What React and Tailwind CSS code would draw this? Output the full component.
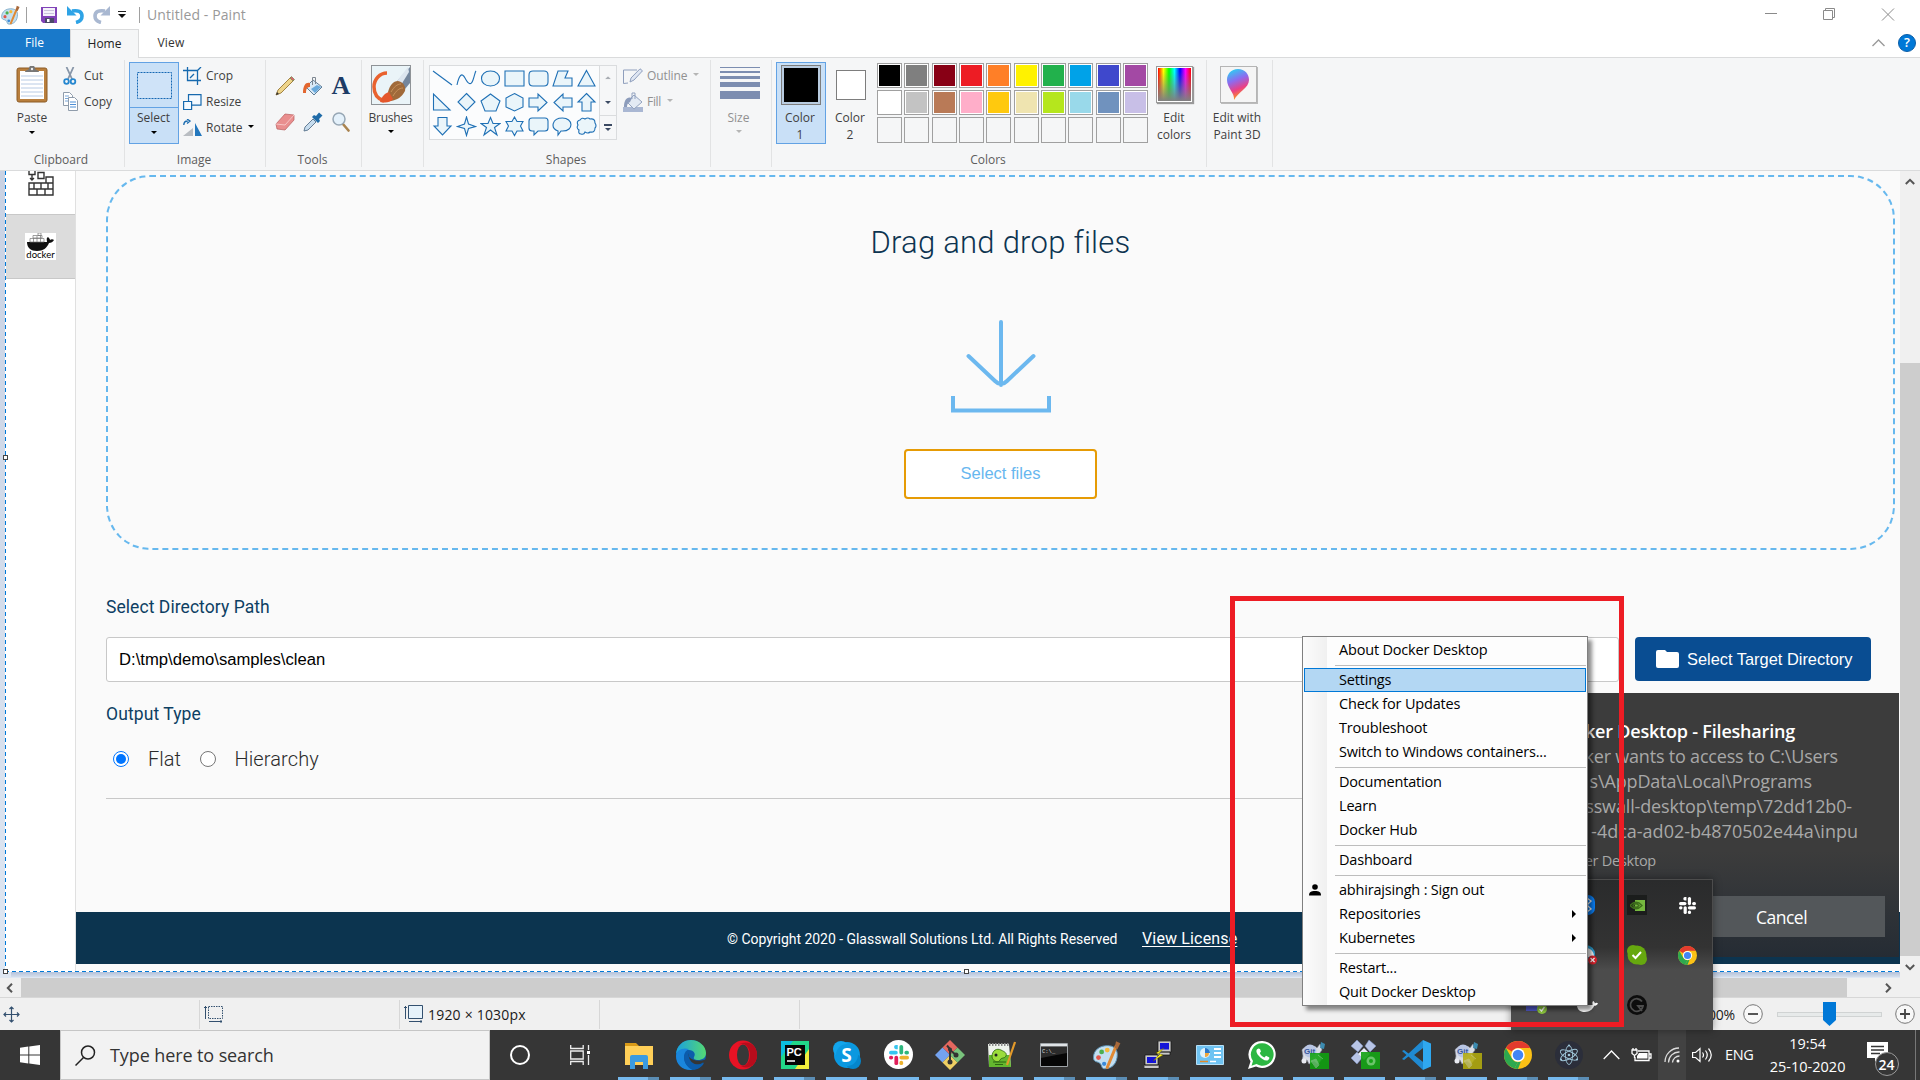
import React from "react";

/* ---------- small shared pieces ---------- */

function Caret({ className = "text-black" }) {
  return (
    <svg width="6" height="3" viewBox="0 0 6 3" className={className}>
      <path d="M0 0h6L3 3z" fill="currentColor" />
    </svg>
  );
}

function Group({ label, className, children }) {
  return (
    <div className={`relative flex h-[112px] shrink-0 flex-col ${className}`}>
      <div className="flex h-[89px] pt-1">{children}</div>
      <div className="flex h-[23px] items-center justify-center pt-[2px] pr-[3px] text-[#5c5c5c]">{label}</div>
      <div className="absolute top-[2px] right-0 h-[107px] w-px bg-[#e2e3e4]" />
    </div>
  );
}

/* ---------- title bar ---------- */

function PaletteIcon({ size = 20 }) {
  return (
    <svg width={size} height={size} viewBox="0 0 24 24">
      <path d="M2 14c0-6 5-9.500 11-9.500 5 0 8 2.500 8 7 0 7-4 11.500-10 11.500-3 0-2-3-4-4.500S2 18 2 14z" fill="#c3dff0" stroke="#5d94b8" strokeWidth=".8" />
      <circle cx="6" cy="14" r="1.900" fill="#e2574c" />
      <circle cx="8.500" cy="9.500" r="1.900" fill="#4caf50" />
      <circle cx="13" cy="8" r="1.900" fill="#f6b93b" />
      <circle cx="10.500" cy="19" r="1.700" fill="#3b8ad8" />
      <path d="M13 22 20 5" stroke="#e08a35" strokeWidth="2.400" strokeLinecap="round" />
      <path d="m19 6 1-5 3.500 1.500-2.500 5z" fill="#a8683a" />
    </svg>
  );
}

function TitleBar() {
  return (
    <div className="flex h-[29px] shrink-0 items-center bg-white">
      <PaletteIcon />
      <div className="ml-[6px] h-4 w-px bg-[#a0a0a0]" />
      <svg className="ml-[14px]" width="16" height="16" viewBox="0 0 16 16">
        <path d="M0 0h16v16H2l-2-2z" fill="#8143b8" />
        <path d="M2 1h12v8H2z" fill="#f4f2fa" />
        <path d="M3 3.500h10M3 6.500h10" stroke="#c9c3dc" />
        <path d="M4 11h9v5H4z" fill="#4a4a68" />
        <path d="M6 12h2.500v3H6z" fill="#fff" />
      </svg>
      <svg className="ml-[10px]" width="17" height="18" viewBox="0 0 17 18">
        <path d="M5 5c6-1 10 .5 10 5 0 3-2 5.500-6 6.500" fill="none" stroke="#2ea3e6" strokeWidth="3.600" />
        <path d="M0 0v9.500h9.500z" fill="#2ea3e6" />
      </svg>
      <svg className="ml-[9px]" width="17" height="18" viewBox="0 0 17 18">
        <path d="M12 5C6 4 2 5.500 2 10c0 3 2 5.500 6 6.500" fill="none" stroke="#a9b8d1" strokeWidth="3.600" />
        <path d="M17 0v9.500H7.500z" fill="#a9b8d1" />
      </svg>
      <svg className="ml-[8px]" width="8" height="7" viewBox="0 0 8 7">
        <path d="M0 .5h8" stroke="#222" />
        <path d="M0 3h8L4 7z" fill="#111" />
      </svg>
      <div className="ml-[13px] h-4 w-px bg-[#a0a0a0]" />
      <div className="ml-[7px] text-[14px] tracking-[0.1px] text-[#999]">Untitled - Paint</div>
      <svg className="mr-[25px] ml-auto" width="131" height="13" viewBox="0 0 131 13" fill="none" stroke="#8a8a8a">
        <path d="M1 5.500h12M59.500 2.500h9v9h-9zM61.500 2.500v-2h9v9h-2M118 .5l12 12M130 .5l-12 12" />
      </svg>
    </div>
  );
}

function Tabs() {
  return (
    <div className="flex h-[29px] shrink-0 border-b border-[#dadbdc] bg-white text-[12px]">
      <div className="flex w-[70px] items-center justify-center bg-[#1979ca] pr-[1px] text-white">File</div>
      <div className="-mb-px flex w-[69px] items-center justify-center border border-b-0 border-[#dadbdc] bg-[#f5f6f7] text-[#222]">Home</div>
      <div className="flex w-[64px] items-center justify-center tracking-[0.2px] text-[#333]">View</div>
      <div className="mr-[4px] ml-auto flex items-center gap-[13px]">
        <svg width="13" height="8" viewBox="0 0 13 8" fill="none" stroke="#9a9a9a" strokeWidth="1.400">
          <path d="m.5 7 6-6 6 6" />
        </svg>
        <div className="flex size-[18px] items-center justify-center rounded-full border border-[#0b5ea8] bg-[#0078d7] text-[13px] font-semibold text-white">?</div>
      </div>
    </div>
  );
}

/* ---------- ribbon ---------- */

function ClipboardGroup() {
  return (
    <Group label="Clipboard" className="w-[125px]">
      <div className="ml-[11px] flex w-[42px] shrink-0 flex-col items-center pt-[4px]">
        <svg width="32" height="37" viewBox="0 0 32 37">
          <rect x="1" y="2" width="30" height="34" rx="2" fill="#b97f3d" stroke="#8d5c26" />
          <path d="M4 5h24v28H4z" fill="#fff" />
          <path d="M5 10h22M5 14h22M5 18h22M5 22h22M5 26h22M5 30h22" stroke="#b8cbe4" />
          <path d="M9 6c0-2 4-2 4-3.500a3 3 0 0 1 6 0C19 4 23 4 23 6z" fill="#777" />
          <circle cx="16" cy="3" r="1.200" fill="#eee" />
        </svg>
        <div className="mt-[7px] leading-[16px]">Paste</div>
        <div className="mt-[5px]"><Caret /></div>
      </div>
      <div className="mt-px ml-[9px] flex flex-col">
        <div className="flex h-[26px] items-center gap-[5px]">
          <svg width="17" height="18" viewBox="0 0 17 18" fill="none">
            <path d="M4.500 0 10 12M11.500 0 6 12" stroke="#8796a8" strokeWidth="1.800" />
            <circle cx="4.500" cy="14.500" r="2.300" stroke="#2687cf" strokeWidth="1.800" />
            <circle cx="11" cy="14.500" r="2.300" stroke="#2687cf" strokeWidth="1.800" />
          </svg>
          Cut
        </div>
        <div className="flex h-[26px] items-center gap-[5px]">
          <svg width="17" height="20" viewBox="0 0 17 20" fill="#fff" stroke="#8f9cab">
            <path d="M1.500.5h6l3 3v10h-9z" />
            <path d="M3 4h4M3 6.500h4M3 9h4" stroke="#7aa7d8" />
            <path d="M6.500 5.500h6l3 3v10h-9z" />
            <path d="M8 10h6M8 12.500h6M8 15h6" stroke="#4d8fd6" />
          </svg>
          Copy
        </div>
      </div>
    </Group>
  );
}

function ImageGroup() {
  return (
    <Group label="Image" className="w-[141px]">
      <div className="ml-[4px] flex h-[82px] w-[50px] flex-col items-center border border-[#62a2e4] bg-[#c9e0f7]">
        <div className="flex h-[45px] w-full items-center justify-center border-b border-[#62a2e4]">
          <svg width="35" height="27" viewBox="0 0 35 27">
            <rect x=".5" y=".5" width="34" height="26" fill="#cfe3f8" stroke="#1567b3" strokeDasharray="2 1" />
          </svg>
        </div>
        <div className="mt-[1px] mr-px leading-[17px]">Select</div>
        <div className="mt-[5px] mr-px"><Caret /></div>
      </div>
      <div className="mt-px ml-[4px] flex flex-col">
        <div className="flex h-[26px] items-center gap-[4px]">
          <svg width="19" height="18" viewBox="0 0 19 18" fill="none" stroke="#1669ae" strokeWidth="1.300">
            <path d="M4.500 0v13.500H18M0 3.500h14.500V18M7 11l4-4M14.500 3.500 18 0" />
          </svg>
          Crop
        </div>
        <div className="flex h-[26px] items-center gap-[4px]">
          <svg width="19" height="17" viewBox="0 0 19 17" fill="#f4f9fe" stroke="#1669ae" strokeWidth="1.200">
            <path d="M5.500.6h12.500v10.500H5.500z" />
            <path d="M.6 7.500h8v8h-8z" />
          </svg>
          Resize
        </div>
        <div className="flex h-[26px] items-center gap-[4px]">
          <svg width="19" height="18" viewBox="0 0 19 18">
            <path d="M0 17 10 9v8z" fill="#b9bdc2" />
            <path d="M12 4v13h7z" fill="#2377bd" />
            <path d="M.8 6c0-3 1-4 4-4M4 0l3 2-3 2.500" fill="none" stroke="#1669ae" strokeWidth="1.300" />
          </svg>
          Rotate
          <div className="ml-px flex h-4 items-center pb-[3px]"><Caret /></div>
        </div>
      </div>
    </Group>
  );
}

function ToolsGroup() {
  return (
    <Group label="Tools" className="w-[96px]">
      <div className="mt-[4px] ml-[5px] grid h-[72px] w-[84px] grid-cols-3 place-items-center">
        <svg width="20" height="20" viewBox="0 0 20 20">
          <path d="m1 19 2-5L15.500 1.500l3 3L6 17z" fill="#eed48a" stroke="#8d6a24" strokeWidth=".8" />
          <path d="m15 2 1.500-1.500 3 3L18 5z" fill="#d9636b" stroke="#5d8c46" strokeWidth=".6" />
          <path d="m1 19 1-3 2 2z" fill="#333" />
        </svg>
        <svg width="20" height="20" viewBox="0 0 20 20">
          <path d="M10 4 19 11l-8 8-8-8z" fill="#d8e9f6" stroke="#5f7d97" />
          <path d="m12 17 6-6-4-2-6 4z" fill="#68a9dc" />
          <path d="M9.500 9V1.500h3V8" fill="none" stroke="#7d8791" />
          <path d="M7 7C3 6 0 9 0 17h3c0-4 1-6 4-6z" fill="#e2662f" />
        </svg>
        <span className="font-[Liberation_Serif] text-[26px] leading-none font-bold text-[#1d3c66]">A</span>
        <svg width="20" height="18" viewBox="0 0 20 18">
          <path d="M1 11 10 1l9 1v5l-9 10-8-1z" fill="#e98e8e" stroke="#b75d5d" strokeWidth=".7" />
          <path d="m1 11 9 1 9-10" fill="none" stroke="#f6c4c4" />
        </svg>
        <svg width="20" height="20" viewBox="0 0 20 20">
          <path d="m11 3 2 1 3-3.500 3.500 3L16 7l1 2-2 2-6-6z" fill="#1f6ba8" />
          <path d="M10 7 2 15l-1 4 4-1 8-8z" fill="#c6dcee" stroke="#56718a" strokeWidth=".9" />
        </svg>
        <svg width="18" height="20" viewBox="0 0 18 20">
          <path d="m10.500 11.500 6 7" stroke="#a9834f" strokeWidth="2.600" strokeLinecap="round" />
          <circle cx="7" cy="7" r="6" fill="#e4f1fb" stroke="#97a7b5" strokeWidth="1.500" />
        </svg>
      </div>
    </Group>
  );
}

function BrushesGroup() {
  return (
    <Group label="" className="w-[62px]">
      <div className="ml-[4px] flex w-[50px] flex-col items-center pt-[3px]">
        <svg width="40" height="40" viewBox="0 0 40 40">
          <rect x=".5" y=".5" width="39" height="39" fill="#eaf4f8" stroke="#8f9397" />
          <path d="M16 8C9 8 3 14 3 22c0 7 4 12 10 14" fill="none" stroke="#e9622f" strokeWidth="3.500" />
          <path d="M39 2 26 16l8 8 5-6z" fill="#75879d" />
          <path d="m37 2-11 14 4 4 8-13z" fill="#dde6ef" />
          <path d="M17 27c2-7 5-11 10-11 5 1 8 5 7 10-3 6-8 9-14 10z" fill="#a06a3a" />
          <path d="M9 37c2-6 5-9 9-10l4 7c-3 4-8 4-13 3z" fill="#e4572c" />
          <path d="M20 27c3-5 6-8 10-8M22 31c3-5 6-8 10-8" stroke="#c9935c" fill="none" />
        </svg>
        <div className="mt-[5px] mr-px leading-[16px] tracking-[-0.2px]">Brushes</div>
        <div className="mt-[4px] mr-px"><Caret /></div>
      </div>
    </Group>
  );
}

const SHAPES = [
  "M1 3 20 17",
  "M1 17C3 7 6 4 9 10s6 8 8 2 2-8 3-9",
  "M10.500 3c12 0 12 15 0 15s-12-15 0-15z",
  "M1 3h19v15H1z",
  "M5 3h11q4 0 4 4v7q0 4-4 4H5q-4 0-4-4V7q0-4 4-4z",
  "M6 3h10l-3 7h7v8H1z",
  "M10.500 2.500 19 18H2z",
  "M1.500 2v16H18z",
  "M10.500 1.500 19 10l-8.500 8.500L2 10z",
  "M10.500 2 20 9l-4 10H5L1 9z",
  "M10.500 1.500 19 6v9l-8.500 4L2 15V6z",
  "M1 6h9V2l9 8.500-9 8.500v-4H1z",
  "M20 6h-9V2l-9 8.500 9 8.500v-4h9z",
  "M10.500 1.500 19 10h-4v9H6v-9H2z",
  "M6 1.500h9V10h4l-8.500 9L2 10h4z",
  "m10.500 1 2 7 7 2.500-7 2-2 7-2-7-7-2 7-2.500z",
  "m10.500 1.500 2.500 6h7l-5.500 4 2.500 7.500-6.500-5-6.500 5 2.500-7.500L1 7.500h7z",
  "m10.500 1 2.500 4.500h6L16.500 10l2.500 5h-6l-2.500 4.500L8 15H2l2.500-5L2 5.500h6z",
  "M4 2h13q3 0 3 3v7q0 3-3 3H10l-4 4v-4H4q-3 0-3-3V5q0-3 3-3z",
  "M6 19V15C-2 12 0 2 10.500 2s12 13 0 13H9z",
  "M4 4q2-3 5-1 3-2 5 0 5-1 5 4 2 3 0 5 0 5-5 4-2 2-5 0-1 3-4 2-3 0-2-4Q0 12 2 9 0 5 4 4z",
];

function ShapesGroup() {
  return (
    <Group label="Shapes" className="w-[287px]">
      <div className="mt-[3px] ml-[5px] flex h-[75px] w-[188px] shrink-0 border border-[#dadcde] bg-[#fbfcfd]">
        <div className="grid w-[168px] grid-cols-7 grid-rows-3 place-items-center">
          {SHAPES.map((d, i) => (
            <svg key={i} width="21" height="21" viewBox="0 0 21 21" fill={i < 2 ? "none" : "#eaf5fa"} stroke="#1f70b5" strokeWidth="1.100">
              <path d={d} />
            </svg>
          ))}
        </div>
        <div className="ml-[1px] flex w-[17px] flex-col border-l border-[#dadcde] bg-[#f6f7f8]">
          <div className="flex h-1/3 rotate-180 items-center justify-center"><Caret className="text-[#a9adb3]" /></div>
          <div className="flex h-1/3 items-center justify-center"><Caret className="text-[#3b4a63]" /></div>
          <div className="flex h-1/3 flex-col items-center justify-center gap-[2px] border-t border-[#dadcde]">
            <div className="h-[2px] w-2 bg-[#3b4a63]" />
            <Caret className="text-[#3b4a63]" />
          </div>
        </div>
      </div>
      <div className="mt-px ml-[6px] flex flex-col text-[#919191]">
        <div className="flex h-[26px] items-center gap-[4px]">
          <svg width="20" height="16" viewBox="0 0 20 16" fill="none" stroke="#8f9fbd">
            <path d="M14 2H.5v13.500L5 15" />
            <path d="m7 14 1-4L17 .8l2.500 2L11 12z" fill="#dfe6f2" />
          </svg>
          <span className="tracking-[-0.1px]">Outline</span>
          <div className="ml-[2px] pb-[3px]"><Caret className="text-[#b5b5b5]" /></div>
        </div>
        <div className="flex h-[26px] items-center gap-[4px]">
          <svg width="20" height="20" viewBox="0 0 20 20">
            <path d="M0 15h20v5H0z" fill="#a9b7d3" />
            <path d="m11 3 8 7-8 7-7-7z" fill="#e3eaf4" stroke="#93a3c0" />
            <path d="M9 7V1h3v6" fill="none" stroke="#93a3c0" />
            <path d="M9 6C4 4 1 8 1 15h3c0-3 1-4 3-5z" fill="#8c9cbb" />
          </svg>
          <span className="tracking-[-0.3px]">Fill</span>
          <div className="ml-[2px] pb-[3px]"><Caret className="text-[#b5b5b5]" /></div>
        </div>
      </div>
    </Group>
  );
}

function SizeGroup() {
  return (
    <Group label="" className="w-[61px]">
      <div className="ml-[9px] flex w-[40px] flex-col items-center pt-[5px] text-[#919191]">
        <div className="h-px w-full bg-[#7c8db0]" />
        <div className="mt-[3px] h-[2px] w-full bg-[#7c8db0]" />
        <div className="mt-[3px] h-[3px] w-full bg-[#7c8db0]" />
        <div className="mt-[3px] h-[5px] w-full bg-[#7c8db0]" />
        <div className="mt-[4px] h-[8px] w-full bg-[#7c8db0]" />
        <div className="mt-[11px] mr-[3px] leading-[16px]">Size</div>
        <div className="mt-[4px] mr-[3px]"><Caret className="text-[#b5b5b5]" /></div>
      </div>
    </Group>
  );
}

const ROW1 = ["bg-black", "bg-[#7f7f7f]", "bg-[#880015]", "bg-[#ed1c24]", "bg-[#ff7f27]", "bg-[#fff200]", "bg-[#22b14c]", "bg-[#00a2e8]", "bg-[#3f48cc]", "bg-[#a349a4]"];
const ROW2 = ["bg-white", "bg-[#c3c3c3]", "bg-[#b97a57]", "bg-[#ffaec9]", "bg-[#ffc90e]", "bg-[#efe4b0]", "bg-[#b5e61d]", "bg-[#99d9ea]", "bg-[#7092be]", "bg-[#c8bfe7]"];

function ColorsGroup() {
  return (
    <Group label="Colors" className="w-[435px]">
      <div className="ml-[4px] flex h-[82px] w-[50px] flex-col items-center border border-[#62a2e4] bg-[#c9e0f7] pt-[2px]">
        <div className="size-[40px] border border-[#7d7d7d] bg-[#b9cce0] p-[2px]"><div className="size-full bg-black" /></div>
        <div className="mt-[4px] mr-[2px] text-center leading-[17px]">Color<br />1</div>
      </div>
      <div className="flex w-[50px] flex-col items-center pt-[3px]">
        <div className="flex size-[40px] items-center justify-center"><div className="size-[30px] border border-[#7d7d7d] bg-white" /></div>
        <div className="mt-[4px] mr-[2px] text-center leading-[17px]">Color<br />2</div>
      </div>
      <div className="mt-px ml-px grid h-[80px] w-[271px] grid-cols-[repeat(10,25px)] justify-between gap-y-[2px]">
        {ROW1.concat(ROW2).map((c, i) => (
          <div key={i} className="size-[25px] border border-[#a0a0a0] bg-white p-px"><div className={`size-full ${c}`} /></div>
        ))}
        {ROW1.map((c) => (
          <div key={c} className="h-[26px] w-[25px] border border-[#a0a0a0] bg-[#f5f6f7]" />
        ))}
      </div>
      <div className="ml-[4px] flex w-[44px] flex-col items-center pt-[4px]">
        <div className="size-[37px] border border-[#9a9a9a] bg-white p-px shadow-[1px_1px_1px_#999]">
          <div className="size-full bg-[linear-gradient(to_bottom,transparent_10%,#808080),linear-gradient(to_right,red,#ff0,lime,cyan,blue,magenta,red)]" />
        </div>
        <div className="mt-[6px] text-center leading-[17px]">Edit<br />colors</div>
      </div>
    </Group>
  );
}

function Paint3DGroup() {
  return (
    <Group label="" className="w-[66px]">
      <div className="flex w-[62px] flex-col items-center pt-[4px]">
        <div className="flex size-[37px] items-center justify-center border border-[#b5b5b5] bg-[#f5f5f5] shadow-[1px_1px_0_#bbb]">
          <svg width="24" height="31" viewBox="0 0 24 31">
            <defs>
              <linearGradient id="drop" x1=".3" x2=".6" y1="0" y2="1">
                <stop offset="0" stopColor="#2ecdf3" />
                <stop offset=".35" stopColor="#8b6cf0" />
                <stop offset=".65" stopColor="#ea3f86" />
                <stop offset="1" stopColor="#ffb000" />
              </linearGradient>
            </defs>
            <path d="M12 0c7 0 11 5 11 11 0 8-11 12-15 20 1-7-7-12-7-20C1 5 5 0 12 0z" fill="url(#drop)" />
          </svg>
        </div>
        <div className="mt-[6px] mr-[2px] text-center leading-[17px] whitespace-nowrap">Edit with<br />Paint 3D</div>
      </div>
    </Group>
  );
}

function Ribbon() {
  return (
    <div className="flex h-[113px] shrink-0 border-b border-[#dadbdc] bg-[#f5f6f7] text-[12px] text-[#3f3f3f]">
      <ClipboardGroup />
      <ImageGroup />
      <ToolsGroup />
      <BrushesGroup />
      <ShapesGroup />
      <SizeGroup />
      <ColorsGroup />
      <Paint3DGroup />
    </div>
  );
}

/* ---------- canvas ---------- */

function Sidebar() {
  return (
    <div className="flex w-[70px] shrink-0 flex-col border-r border-[#e0e0e0] bg-white">
      <div className="flex h-[43px] justify-center">
        <svg width="26" height="25" viewBox="0 0 26 25" fill="none" stroke="#333" strokeWidth="1.400">
          <path d="M1 24h24v-6H1zM1 18h24v-6H1zM9 24v-6M17 24v-6M6 18v-6M13 18v-6M20 18v-6M18 12V6h7v6M10 1.500h6v6h-6zM1-3h6v6.500H1zM4 4v5M2 7l2 2 2-2" />
        </svg>
      </div>
      <div className="flex h-[65px] items-center justify-center border-y border-[#c8c8c8] bg-[#dcdcdc]">
        <div className="flex h-[27px] w-[31px] flex-col items-center bg-white">
          <svg width="27" height="18" viewBox="0 0 27 18">
            <path d="M0 9h20c0-2-1-4 1-5 1 1 2 2 2 3 1-1 3-1 4 0-1 2-3 3-5 3-2 5-6 8-12 8C4 18 0 15 0 9z" fill="#111" />
            <path d="M3 5.500h14V9H3zM6 2.500h9V5H6zM11 0h3v2.500h-3zM6.500 5v4M10 3v6M13.500 3v6" fill="none" stroke="#777" strokeWidth=".7" />
          </svg>
          <span className="font-[Lato] text-[9.500px] leading-[7px] text-black">docker</span>
        </div>
      </div>
    </div>
  );
}

function DropZone() {
  return (
    <div className="flex h-[375px] flex-col items-center rounded-[44px] border-2 border-dashed border-[#66b8ee]">
      <div className="mt-[46px] font-[Roboto] text-[31px] leading-[40px] font-light tracking-[0.25px] text-[#0d3450]">Drag and drop files</div>
      <svg className="mt-[57px]" width="102" height="94" viewBox="0 0 102 94" fill="none" stroke="#6cb8ef" strokeWidth="4">
        <path d="M51 2v63M18.500 36 45 61q6 6 12 0L83.500 36" strokeLinecap="round" />
        <path d="M3 76v14.500h96V76" />
      </svg>
      <div className="mt-[35px] flex h-[50px] w-[193px] items-center justify-center rounded-[4px] border-2 border-[#e69b05] bg-white pb-[2px] font-[Liberation_Sans] text-[16.500px] text-[#67b7ef]">Select files</div>
    </div>
  );
}

function PageBody() {
  return (
    <div className="flex grow flex-col bg-[#fafafa]">
      <div className="flex h-[741px] flex-col pt-[4px] pr-[5px] pl-[30px]">
        <DropZone />
        <div className="mt-[46px] font-[Roboto] text-[17.500px] leading-[22px] tracking-[0.06px] text-[#0d3f63]">Select Directory Path</div>
        <div className="mt-[19px] flex gap-[16px] font-[Liberation_Sans]">
          <div className="flex h-[45px] w-[1513px] items-center rounded-[3px] border border-[#c8c8c8] bg-white pt-[1px] pl-[12px] text-[16.650px] text-black">D:\tmp\demo\samples\clean</div>
          <div className="flex h-[44px] w-[236px] items-center rounded-[4px] bg-[#094d92] pl-[21px] text-white">
            <svg width="23" height="18" viewBox="0 0 23 18"><path d="M2 0h7l2 2h10q2 0 2 2v12q0 2-2 2H2q-2 0-2-2V2q0-2 2-2z" fill="#fff" /></svg>
            <span className="ml-[8px] text-[16.400px]">Select Target Directory</span>
          </div>
        </div>
        <div className="mt-[21px] font-[Roboto] text-[17.500px] leading-[22px] tracking-[0.1px] text-[#0d3f63]">Output Type</div>
        <div className="mt-[22px] flex h-[24px] items-center pl-[7px] font-[Roboto] text-[20px] font-light text-[#2b2b2b]">
          <div className="flex size-[16px] items-center justify-center rounded-full border border-[#0075ff] bg-white"><div className="size-[10px] rounded-full bg-[#0075ff]" /></div>
          <span className="ml-[19px] w-[33px]">Flat</span>
          <div className="ml-[19px] size-[16px] rounded-full border border-[#767676] bg-white" />
          <span className="ml-[18.500px] tracking-[0.1px]">Hierarchy</span>
        </div>
        <div className="mt-[27px] mr-[23px] h-px bg-[#c8c8c8]" />
      </div>
      <div className="flex h-[52px] items-center bg-[#0c344f] pl-[651px] text-white">
        <span className="w-[415px] pt-[3px] font-[Roboto] text-[14px] tracking-[-0.030px]">© Copyright 2020 - Glasswall Solutions Ltd. All Rights Reserved</span>
        <span className="pt-[2px] font-[Roboto] text-[16px] tracking-[0.150px] underline underline-offset-2">View License</span>
      </div>
    </div>
  );
}

function Handle({ className }) {
  return <div className={`absolute size-[5px] border border-[#444] bg-white ${className}`} />;
}

function Canvas() {
  return (
    <div className="flex h-[807px] shrink-0">
      <div className="relative flex w-[1900px] flex-col bg-linear-to-b from-[#c9d2e3] to-[#dfe7f2]">
        <div className="flex h-[800px] pl-[5px]">
          <div className="w-px bg-[repeating-linear-gradient(to_bottom,#0078d7_0_4px,#fff_4px_7px)]" />
          <Sidebar />
          <PageBody />
        </div>
        <div className="ml-[5px] h-px bg-[repeating-linear-gradient(to_right,#0078d7_0_4px,#fff_4px_7px)]" />
        <div className="ml-[11px] h-[5px] bg-linear-to-b from-[#b4c2d9] to-[#d5deec]" />
        <Handle className="top-[284px] left-[3px]" />
        <Handle className="top-[798px] left-[3px]" />
        <Handle className="top-[798px] left-[964px]" />
      </div>
      <div className="flex w-[20px] flex-col items-center bg-[#f0f0f0]">
        <svg className="mt-[7px]" width="10" height="7" viewBox="0 0 10 7" fill="none" stroke="#555" strokeWidth="2"><path d="m.8 6 4.200-4.200L9.200 6" /></svg>
        <div className="mt-[178px] h-[593px] w-full bg-[#cdcdcd]" />
        <svg className="mt-[8px]" width="10" height="7" viewBox="0 0 10 7" fill="none" stroke="#555" strokeWidth="2"><path d="m.8 1 4.200 4.200L9.200 1" /></svg>
      </div>
    </div>
  );
}

function HScroll() {
  return (
    <div className="flex h-[19px] shrink-0 items-center bg-[#f0f0f0]">
      <svg className="ml-[6px]" width="7" height="10" viewBox="0 0 7 10" fill="none" stroke="#555" strokeWidth="2"><path d="M6 .8 1.800 5 6 9.200" /></svg>
      <div className="ml-[8px] h-full w-[1826px] bg-[#cdcdcd]" />
      <svg className="ml-[38px]" width="7" height="10" viewBox="0 0 7 10" fill="none" stroke="#555" strokeWidth="2"><path d="M1 .8 5.200 5 1 9.200" /></svg>
    </div>
  );
}

function StatusBar() {
  return (
    <div className="flex h-[33px] shrink-0 items-center border-t border-[#d7d7d7] bg-[#f0f0f0] text-[14px] text-[#1a1a1a]">
      <div className="flex h-[29px] w-[200px] items-center border-r border-[#d7d7d7] pl-[3px]">
        <svg width="17" height="17" viewBox="0 0 17 17" fill="none" stroke="#33506f" strokeWidth="1.200"><path d="M8.500 1v15M1 8.500h15M6.500 3l2-2 2 2M6.500 14l2 2 2-2M3 6.500l-2 2 2 2M14 6.500l2 2-2 2" /></svg>
      </div>
      <div className="flex h-[29px] w-[200px] items-center border-r border-[#d7d7d7] pl-[4px]">
        <svg width="20" height="18" viewBox="0 0 20 18" fill="none" stroke="#33506f"><path d="M1.500 1v13M0 2.500h3M5 16.500h13M17 15v3" /><path d="M4.500 1.500h14v12h-14z" strokeDasharray="1.500 1" /></svg>
      </div>
      <div className="flex h-[29px] w-[200px] items-center border-r border-[#d7d7d7] pl-[4px]">
        <svg width="20" height="18" viewBox="0 0 20 18" fill="none" stroke="#33506f"><path d="M1.500 1v13M0 2.500h3M5 16.500h13M17 15v3" /><path d="M4.500.5h14v13h-14z" fill="#e6f2fa" /></svg>
        <span className="ml-[4px] pt-px tracking-[0.200px]">1920 × 1030px</span>
      </div>
      <div className="h-[29px] w-[200px] border-r border-[#d7d7d7]" />
      <div className="mr-[5px] ml-auto flex items-center">
        <span className="mr-[8px] pt-px tracking-[-0.200px]">100%</span>
        <svg width="20" height="20" viewBox="0 0 20 20" fill="#f8f8f8" stroke="#777"><circle cx="10" cy="10" r="9.300" /><path d="M5 10h10" stroke="#444" strokeWidth="1.800" /></svg>
        <div className="relative mr-[13px] ml-[14px] flex h-[24px] w-[105px] items-center">
          <div className="h-[5px] w-full border border-[#d0d3d3] bg-[#e7eaea]" />
          <svg className="absolute top-0 left-[46px]" width="13" height="24" viewBox="0 0 13 24"><path d="M0 0h13v18l-6.500 6L0 18z" fill="#0078d7" /></svg>
        </div>
        <svg width="20" height="20" viewBox="0 0 20 20" fill="#f8f8f8" stroke="#777"><circle cx="10" cy="10" r="9.300" /><path d="M5 10h10M10 5v10" stroke="#444" strokeWidth="1.800" /></svg>
      </div>
    </div>
  );
}

/* ---------- taskbar ---------- */

function ChromeIcon({ size = 27 }) {
  return (
    <svg width={size} height={size} viewBox="0 0 24 24">
      <circle cx="12" cy="12" r="12" fill="#fbc116" />
      <path d="M12 0a12 12 0 0 1 10.400 6H12a6 6 0 0 0-5.200 3L1.600 6A12 12 0 0 1 12 0z" fill="#e33b2e" />
      <path d="M1.600 6 6.800 15A6 6 0 0 0 12 18l-3 5.600A12 12 0 0 1 1.600 6z" fill="#2da94f" />
      <path d="m9 23.600 3-5.600a6 6 0 0 0 2.500-.5L12 24z" fill="#2da94f" />
      <circle cx="12" cy="12" r="5.800" fill="#fff" />
      <circle cx="12" cy="12" r="4.500" fill="#4285f4" />
    </svg>
  );
}

function SlackMark({ size, colors }) {
  const [a, b, c, d] = colors;
  return (
    <svg width={size} height={size} viewBox="0 0 24 24">
      <g fill={a}><rect x="0" y="7" width="10.500" height="4.500" rx="2.200" /><path d="M10.500 0v5H8.300a2.200 2.500 0 0 1 0-5z" /></g>
      <g fill={b}><rect x="12.500" y="0" width="4.500" height="11.500" rx="2.200" /><rect x="18.500" y="7" width="5.500" height="4.500" rx="2.200" /></g>
      <g fill={c}><rect x="12.500" y="13" width="11.500" height="4.500" rx="2.200" /><rect x="12.500" y="19" width="4.500" height="5" rx="2.200" /></g>
      <g fill={d}><rect x="6.500" y="13" width="4.500" height="11" rx="2.200" /><rect x="0" y="13" width="5" height="4.500" rx="2.200" /></g>
    </svg>
  );
}

function GitGear({ badge }) {
  return (
    <svg width="30" height="28" viewBox="0 0 30 28">
      <path d="M3 9c2-4 12-6 15-2l3-4 2 6-3 4 3 5-4 5-4-3-5 3-2-4-5 1 1-5z" fill="#d9dde6" stroke="#8b90a0" strokeWidth=".6" />
      <circle cx="11" cy="10" r="6.500" fill="#b9c6e4" />
      <text x="5" y="13" fontFamily="Liberation Sans" fontSize="8" fontWeight="700" fill="#39599c">Git</text>
      <path d="m22 1 4 2-1 5-4-1z" fill="#3c8bb0" />
      <circle cx="5" cy="20" r="2.500" fill="#e9ebf1" />
      <path d="M11 12h19v16H11z" fill={badge} opacity=".88" />
      <path d="m12 20 5-2 3 6-3 3zM19 14l5 4" fill="#d9dde6" stroke="#d9dde6" opacity=".35" />
    </svg>
  );
}

const APPS = [
  { key: "explorer", multi: true, icon: (
    <svg width="28" height="28" viewBox="0 0 28 28"><path d="M0 2h11l3 3v4H0z" fill="#d99a18" /><path d="M0 5h28v19H0z" fill="#ffcf58" /><path d="M5 28V16q0-2 2-2h14q2 0 2 2v12h-5v-7h-8v7z" fill="#3b9be0" /></svg>
  ) },
  { key: "edge", multi: true, icon: (
    <svg width="30" height="30" viewBox="0 0 30 30">
      <defs><linearGradient id="edgeTop" x1="0" x2="1"><stop offset="0" stopColor="#1aa0e0" /><stop offset="1" stopColor="#54d873" /></linearGradient></defs>
      <circle cx="15" cy="15" r="15" fill="#0c5cab" />
      <path d="M0 15C0 6 7 0 15 0s15 6 15 13c0 5-4 7-8 7-3 0-5-1-4-3 2-3 0-7-5-7C6 9 0 12 0 15z" fill="url(#edgeTop)" />
      <path d="M0 16c0-6 7-9 13-7-4 2-5 5-5 8 0 6 4 11 9 12.800C7 31 0 25 0 16z" fill="#1a86dc" />
      <path d="M13 13c-3 3-2 9 4 11 4 1.500 8 0 10-1.500l2 1-3 3.500H31V19l-3 1c-6 2-12 0-15-3z" fill="#363636" />
      <path d="M8 17c0 6 4 11 9 12.800 5 0 9-3 11-6.800-3 2-8 2-11 0s-5-6-4-10c-3 0-5 2-5 4z" fill="#0c5cab" />
    </svg>
  ) },
  { key: "opera", icon: (
    <svg width="30" height="30" viewBox="0 0 30 30"><ellipse cx="15" cy="15" rx="14" ry="14.500" fill="#e81224" /><ellipse cx="15" cy="15" rx="6" ry="10.500" fill="#383838" /><path d="M10 5c6-4 12 2 12 10s-6 14-12 10c10 6 19 0 19-10S20-1 10 5z" fill="#b80c1c" /></svg>
  ) },
  { key: "pycharm", multi: true, icon: (
    <svg width="28" height="28" viewBox="0 0 28 28"><path d="M0 0h28v28H0z" fill="#21d789" /><path d="m14 28 14-20v20z" fill="#f3ee3c" /><path d="M0 0h12L0 16z" fill="#0bbde0" /><path d="M4 4h20v20H4z" fill="#050505" /><text x="5.500" y="14.500" fontFamily="Liberation Sans" fontSize="11" fontWeight="700" fill="#fff">PC</text><path d="M6 20h8" stroke="#fff" strokeWidth="1.500" /></svg>
  ) },
  { key: "skype", icon: (
    <svg width="28" height="28" viewBox="0 0 28 28"><circle cx="14" cy="14" r="13" fill="#0a9ae2" /><circle cx="8" cy="8" r="8" fill="#12a5ec" /><circle cx="20" cy="20" r="8" fill="#0586cc" /><circle cx="14" cy="14" r="11" fill="#0b98e0" /><text x="8.300" y="21" fontFamily="Open Sans" fontSize="19" fontWeight="700" fill="#fff">S</text></svg>
  ) },
  { key: "slack", icon: (
    <div className="flex size-[29px] items-center justify-center rounded-full bg-white"><SlackMark size={20} colors={["#36c5f0", "#2eb67d", "#ecb22e", "#e01e5a"]} /></div>
  ) },
  { key: "git", icon: (
    <svg width="30" height="30" viewBox="0 0 30 30"><path d="m15 0 7.500 7.500L15 15 7.500 7.500z" fill="#e5675e" /><path d="m7.500 7.500 7.500 7.500-7.500 7.500L0 15z" fill="#74a3f0" /><path d="m15 15 7.500 7.500L15 30l-7.500-7.500z" fill="#efd063" /><path d="m22.500 7.500 7.500 7.500-7.500 7.500L15 15z" fill="#79c37c" /><path d="M12 5.500 15 9v13M15 10l6 5" stroke="#333" strokeWidth="2" fill="none" /><circle cx="15" cy="22" r="2.500" fill="#333" /><circle cx="21" cy="15" r="2.500" fill="#333" /><circle cx="15" cy="9.500" r="2" fill="#333" /></svg>
  ) },
  { key: "notepadpp", icon: (
    <svg width="28" height="28" viewBox="0 0 28 28"><path d="M0 3h21l2 23H1z" fill="#eef3ec" /><path d="M1 14h21l1 12H1z" fill="#63b72e" /><path d="M4 16c0-7 5-9 9-7s6 3 5 6-5 1-6 4-7 2-8-3z" fill="#9bdc3b" stroke="#2c6510" strokeWidth=".8" /><circle cx="8" cy="14" r="1.500" fill="#222" /><path d="M5 21h13M7 23.500h8" stroke="#2c6510" /><path d="M1 3.500h20" stroke="#888" strokeDasharray="1.500 1.500" strokeWidth="3" /><path d="m19 24 8-23" stroke="#e39a2a" strokeWidth="2.200" /></svg>
  ) },
  { key: "cmd", multi: true, icon: (
    <svg width="28" height="24" viewBox="0 0 28 24"><path d="M.5.5h27v23H.5z" fill="#060606" stroke="#9da2a6" /><path d="M1 1h26v2.500H1z" fill="#dfe3e6" /><path d="M1 4h26v6L1 15z" fill="#2b2b2b" /><text x="2" y="10" fontFamily="Liberation Mono" fontSize="5.500" fill="#ddd">C:\_</text></svg>
  ) },
  { key: "paint", multi: true, icon: <PaletteIcon size={30} /> },
  { key: "putty", multi: true, icon: (
    <svg width="28" height="28" viewBox="0 0 28 28"><path d="M14 0h13v11H14zM13 11h13v3H13z" fill="#c8c8c8" stroke="#111" strokeWidth=".7" /><path d="M16 2h9v6.500h-9z" fill="#1414d8" /><path d="M1 14h13v10H1zM0 24h15v3.500H0z" fill="#c8c8c8" stroke="#111" strokeWidth=".7" /><path d="M3 16h9v6H3z" fill="#1414d8" /><path d="m20 7-8 5 4 1-7 7 10-6-4-1.500z" fill="#f8ee22" stroke="#5a5200" strokeWidth=".4" /></svg>
  ) },
  { key: "control", icon: (
    <svg width="28" height="20" viewBox="0 0 28 20"><path d="M.5.5h27v19H.5z" fill="#6fc3f2" stroke="#b7e0f7" /><circle cx="9" cy="8" r="5" fill="#dff2fc" /><path d="M9 3a5 5 0 0 1 5 5H9z" fill="#2b78c8" /><path d="M9 8h4a4 4 0 0 1-4 4z" fill="#f0a63a" /><path d="M18 4h7M18 8h7M18 12h7" stroke="#fff" strokeWidth="2" /><path d="M4 16.500h8" stroke="#e08a2a" strokeWidth="1.500" /><path d="M14 16.500h6" stroke="#fff" strokeWidth="1.500" /></svg>
  ) },
  { key: "whatsapp", icon: (
    <svg width="28" height="28" viewBox="0 0 28 28"><path d="M14.500 0A13.500 13.500 0 1 1 8 25.500L0 28l2.500-7.500A13.500 13.500 0 0 1 14.500 0z" fill="#fff" /><path d="M14.500 2.300A11.200 11.200 0 1 1 8.500 23L3.500 24.700 5 20A11.200 11.200 0 0 1 14.500 2.300z" fill="#2cb742" /><path d="M10.500 7.500c-3 1-2.500 4 0 7s6 5.500 9 5c2-1 2.500-3 1-3.500l-2.500-1.200-1.500 1.700c-2-.7-4-2.500-4.700-4.500l1.200-1.500-1-2.500z" fill="#fff" /></svg>
  ) },
];

const APPS_RIGHT = [
  { key: "gitgreen", icon: <GitGear badge="#0fa30f" /> },
  { key: "cubes", icon: (
    <svg width="30" height="30" viewBox="0 0 30 30"><path d="m7 0 6 6-5 6-7-6zM19 0l7 6-6 6-5-6zM7 12l5 6-5 6-6-6z" fill="#b7c4e6" stroke="#7f92c4" strokeWidth=".5" /><path d="m14 8 6 6-6 6-6-6z" fill="#e8ecf7" /><path d="M11 12h19v17H11z" fill="#16a316" opacity=".92" /><circle cx="21" cy="21" r="4.500" fill="#6cc46c" /><circle cx="21" cy="21" r="2" fill="#16a316" /></svg>
  ) },
  { key: "vscode", multi: true, icon: (
    <svg width="30" height="30" viewBox="0 0 30 30"><path d="M22 0 7.500 13.500 3 10 1 11l4.500 4L1 19l2 1 4.500-3.500L22 30z" fill="#1f8ad2" /><path d="m22 0 8 3.500v23L22 30zM22 8v14l-9-7z" fill="#2fa8f0" /><path d="M22 8v14l-9-7z" fill="#353535" /></svg>
  ) },
  { key: "gityellow", icon: <GitGear badge="#b3ac0e" /> },
  { key: "chrome", multi: true, icon: <ChromeIcon size={28} /> },
  { key: "electron", multi: true, icon: (
    <svg width="28" height="28" viewBox="0 0 28 28" fill="none"><circle cx="14" cy="14" r="14" fill="#2b2e3a" /><g stroke="#9fc6d8" strokeWidth=".9"><ellipse cx="14" cy="14" rx="9.500" ry="3.600" transform="rotate(25 14 14)" /><ellipse cx="14" cy="14" rx="9.500" ry="3.600" transform="rotate(90 14 14)" /><ellipse cx="14" cy="14" rx="9.500" ry="3.600" transform="rotate(150 14 14)" /></g><circle cx="14" cy="14" r="1.300" fill="#9fc6d8" /><g fill="#9fc6d8"><circle cx="14" cy="4.500" r="1.100" /><circle cx="22" cy="18.500" r="1.100" /><circle cx="6" cy="18.500" r="1.100" /></g></svg>
  ) },
];

function AppButton({ app }) {
  return (
    <div className="flex flex-1 flex-col items-center">
      <div className="flex h-[47px] items-center pt-[2px]">{app.icon}</div>
      <div className="flex h-[3px] w-[41px] justify-end bg-[#76b9ed]">{app.multi && <div className="w-[11px] bg-[#5b8db4]" />}</div>
    </div>
  );
}

function Taskbar() {
  return (
    <div className="flex h-[50px] shrink-0 bg-[#363636]">
      <div className="flex w-[60px] items-center justify-center">
        <svg width="20" height="20" viewBox="0 0 20 20" fill="#fff"><path d="M0 2.800 8.300 1.600v8H0zM9.300 1.500 20 0v9.600H9.300zM0 10.500h8.300v8L0 17.300zM9.300 10.500H20V20L9.300 18.500z" /></svg>
      </div>
      <div className="flex w-[430px] items-center border border-[#c6c6c6] bg-[#f2f2f2] pl-[14px]">
        <svg width="21" height="21" viewBox="0 0 21 21" fill="none" stroke="#222" strokeWidth="1.500"><circle cx="13" cy="7.500" r="6.500" /><path d="M8.500 12.500.5 20.500" /></svg>
        <span className="ml-[14px] text-[18px] tracking-[-0.100px] text-[#333]">Type here to search</span>
      </div>
      <div className="flex w-[60px] items-center justify-center"><div className="size-[20px] rounded-full border-[2.500px] border-white" /></div>
      <div className="flex w-[60px] items-center justify-center">
        <svg width="21" height="20" viewBox="0 0 21 20" fill="none" stroke="#eee" strokeWidth="1.300"><path d="M.7 0v3.500h12.500V0M.7 20v-3.500h12.500V20M.7 6h12.500v8H.7zM18.500 0v5M18.500 10v10" /><path d="M17 6h3v3h-3z" fill="#fff" stroke="none" /></svg>
      </div>
      <div className="ml-[3px] flex w-[675px]">{APPS.map((a) => <AppButton key={a.key} app={a} />)}</div>
      <div className="flex w-[306px]">{APPS_RIGHT.map((a) => <AppButton key={a.key} app={a} />)}</div>
      <div className="flex grow items-center text-white">
        <svg className="ml-[9px]" width="17" height="10" viewBox="0 0 17 10" fill="none" stroke="#fff" strokeWidth="1.300"><path d="m.7 9 7.800-8 7.800 8" /></svg>
        <svg className="ml-[11px]" width="21" height="14" viewBox="0 0 21 14" fill="none" stroke="#fff" strokeWidth="1.300"><path d="M7 3h11v9.500H4V9M18.500 6h1.500v4h-1.500M1 2h5v3.500L3.500 7.500 1 5.500zM2 0v2M5 0v2M3.500 7v3" /><path d="M8 5h8.500v5.500H6V8z" fill="#fff" stroke="none" /></svg>
        <div className="ml-[6px] flex h-full w-[28px] items-center justify-center bg-[#424242]">
          <svg width="16" height="16" viewBox="0 0 16 16" fill="none" stroke="#ddd" strokeWidth="1.300"><path d="M1 15A14 14 0 0 1 15 1M4.500 15.500A10.500 10.500 0 0 1 15.500 5M8.500 15.500a7 7 0 0 1 7-6.500" /><circle cx="14" cy="14" r="1.500" fill="#fff" stroke="none" /></svg>
        </div>
        <svg className="ml-[6px]" width="21" height="16" viewBox="0 0 21 16" fill="none" stroke="#fff" strokeWidth="1.200"><path d="M.6 5.500h3L8 1.500v13l-4.400-4h-3zM10.500 5.500q2 2.500 0 5M13.500 3.500q3.500 4.500 0 9M16.500 1.500q5.500 6.500 0 13" /></svg>
        <span className="ml-[12px] text-[14.500px] tracking-[-0.300px]">ENG</span>
        <div className="ml-[16px] w-[76px] text-center text-[14.500px] leading-[23px] whitespace-nowrap">19:54<br />25-10-2020</div>
        <div className="relative ml-[21px] h-[36px] w-[32px]">
          <svg className="mt-[5px]" width="21" height="21" viewBox="0 0 21 21"><path d="M0 0h21v16h-9l-4 4v-4H0z" fill="#fff" /><path d="M4 4.500h13M4 8h13M4 11.500h9" stroke="#363636" strokeWidth="1.500" /></svg>
          <div className="absolute top-[15px] left-[8px] flex size-[24px] items-center justify-center rounded-full border border-[#9a9a9a] bg-[#363636] text-[14px] font-semibold">24</div>
        </div>
        <div className="mr-[4px] ml-auto h-full w-px bg-[#777]" />
      </div>
    </div>
  );
}

/* ---------- overlays ---------- */

function Toast() {
  return (
    <div className="absolute top-[693px] left-[1415px] flex h-[264px] w-[484px] flex-col items-end overflow-hidden bg-linear-to-b from-[#3c3c3c] from-60% to-[#252c34] text-[18px] leading-[25px] whitespace-nowrap text-[#a8a8a8]">
      <div className="mt-[26px] mr-[104px] font-semibold tracking-[-0.200px] text-white">Docker Desktop - Filesharing</div>
      <div className="mr-[61px] tracking-[-0.200px]">Docker wants to access to C:\Users</div>
      <div className="mr-[87px] tracking-[-0.150px]">s\AppData\Local\Programs</div>
      <div className="mr-[47px] tracking-[-0.150px]">\glasswall-desktop\temp\72dd12b0-</div>
      <div className="mr-[41px]">-4dca-ad02-b4870502e44a\inpu</div>
      <div className="mt-[4px] mr-[243px] text-[14.500px] tracking-[-0.250px]">Docker Desktop</div>
      <div className="mt-[23px] mr-[14px] flex h-[41px] w-[207px] items-center justify-center bg-[#53575a] pt-[2px] text-[17.500px] tracking-[-0.500px] text-white">Cancel</div>
    </div>
  );
}

function TrayPopup() {
  return (
    <div className="absolute top-[879px] left-[1511px] grid h-[151px] w-[202px] grid-cols-4 grid-rows-3 place-items-center border border-b-0 border-[#4c4c4c] bg-linear-to-b from-[#2a2b2c] via-[#333] via-45% to-[#4c4c4c] to-60% shadow-[0_0_8px_rgba(0,0,0,.4)]">
      <div />
      <svg width="20" height="20" viewBox="0 0 20 20"><rect x="2" width="16" height="20" rx="7" fill="#0a7cf0" /><path d="m6 6 8 8-4 3V3l4 3-8 8" fill="none" stroke="#fff" strokeWidth="1.300" /></svg>
      <div className="flex size-[20px] items-center justify-center bg-[#1b1d1c]">
        <svg width="15" height="11" viewBox="0 0 15 11"><path d="M5 0h10v11H5z" fill="#76b83f" /><path d="M0 5.500Q6-1 12 5.500 6 12 0 5.500zM3 5.500Q6 2 9 5.500 6 9 3 5.500z" fill="none" stroke="#3e6f1c" strokeWidth="1.300" /></svg>
      </div>
      <SlackMark size={17} colors={["#fff", "#fff", "#fff", "#fff"]} />
      <div />
      <svg width="20" height="20" viewBox="0 0 20 20"><circle cx="9" cy="9" r="9" fill="#2ba0d4" /><path d="M9 3c4 0 8 3 8 9H4c0-5 2-9 5-9z" fill="#fff" /><circle cx="15.500" cy="15" r="4.500" fill="#d9202a" /><path d="m13.500 13 4 4m0-4-4 4" stroke="#fff" strokeWidth="1.200" /></svg>
      <svg width="20" height="20" viewBox="0 0 20 20"><circle cx="10" cy="10" r="9.500" fill="#66a80f" /><circle cx="6" cy="6" r="6" fill="#66a80f" /><circle cx="14" cy="14" r="6" fill="#66a80f" /><path d="m5.500 10 3 3 5.500-6" fill="none" stroke="#fff" strokeWidth="2" /></svg>
      <ChromeIcon size={19} />
      <svg width="22" height="18" viewBox="0 0 22 18"><path d="M0 3h11v12H0z" fill="#5059c9" /><circle cx="14" cy="4" r="3" fill="#7b83eb" /><path d="M11 7h8v6h-8z" fill="#7b83eb" /><circle cx="16" cy="13" r="5" fill="#8cc63e" /><path d="m13.500 13 2 2 3-4" fill="none" stroke="#fff" strokeWidth="1.400" /></svg>
      <svg width="21" height="16" viewBox="0 0 27 18"><path d="M0 9h20c0-2-1-4 1-5 1 1 2 2 2 3 1-1 3-1 4 0-1 2-3 3-5 3-2 5-6 8-12 8C4 18 0 15 0 9z" fill="#fff" /></svg>
      <svg width="20" height="20" viewBox="0 0 20 20"><circle cx="10" cy="10" r="10" fill="#0d0d0d" /><path d="M15 6.500A6.300 6.300 0 1 0 16 11h-5l4 5" fill="none" stroke="#4d4d4d" strokeWidth="1.800" /></svg>
      <div />
    </div>
  );
}

const MENU = [
  "About Docker Desktop", null, "Settings", "Check for Updates", "Troubleshoot", "Switch to Windows containers...", null,
  "Documentation", "Learn", "Docker Hub", null, "Dashboard", null,
  "abhirajsingh : Sign out", "Repositories", "Kubernetes", null, "Restart...", "Quit Docker Desktop",
];

function ContextMenu() {
  return (
    <div className="absolute top-[636px] left-[1302px] flex w-[286px] flex-col border border-[#808080] bg-[#fdfdfd] bg-[linear-gradient(to_right,#fcfcfc,#f0f0f0_24px,#fdfdfd_24px)] p-px text-[14.500px] tracking-[-0.190px] text-black shadow-[4px_4px_4px_rgba(0,0,0,.45)]">
      {MENU.map((m, i) =>
        m === null ? (
          <div key={i} className="ml-[31px] flex h-[6px] items-center"><div className="h-px w-full bg-[#bdbdbd]" /></div>
        ) : (
          <div key={i} className={`flex h-[24px] items-center ${m === "Settings" ? "border border-[#0078d7] bg-[#b3d7f3] pl-0" : "px-px"}`}>
            <div className="flex w-[34px] shrink-0 pl-[4px]">
              {m.startsWith("abhi") && (
                <svg width="12" height="12" viewBox="0 0 12 12"><circle cx="6" cy="3" r="2.800" /><path d="M0 11.500C0 8 2 7 6 7s6 1 6 4.500z" /></svg>
              )}
            </div>
            <span className="grow pb-px whitespace-nowrap">{m}</span>
            {(m === "Repositories" || m === "Kubernetes") && (
              <svg className="mr-[9px]" width="4" height="8" viewBox="0 0 4 8"><path d="M0 0v8l4-4z" /></svg>
            )}
          </div>
        )
      )}
    </div>
  );
}

export default function App() {
  return (
    <div className="relative flex h-[1080px] w-[1920px] flex-col overflow-hidden bg-[#f0f0f0] font-['Open_Sans',sans-serif]">
      <TitleBar />
      <Tabs />
      <Ribbon />
      <Canvas />
      <HScroll />
      <StatusBar />
      <Taskbar />
      <Toast />
      <TrayPopup />
      <ContextMenu />
      <div className="absolute top-[596px] left-[1230px] h-[431px] w-[394px] border-[5px] border-[#ed1c24]" />
    </div>
  );
}
